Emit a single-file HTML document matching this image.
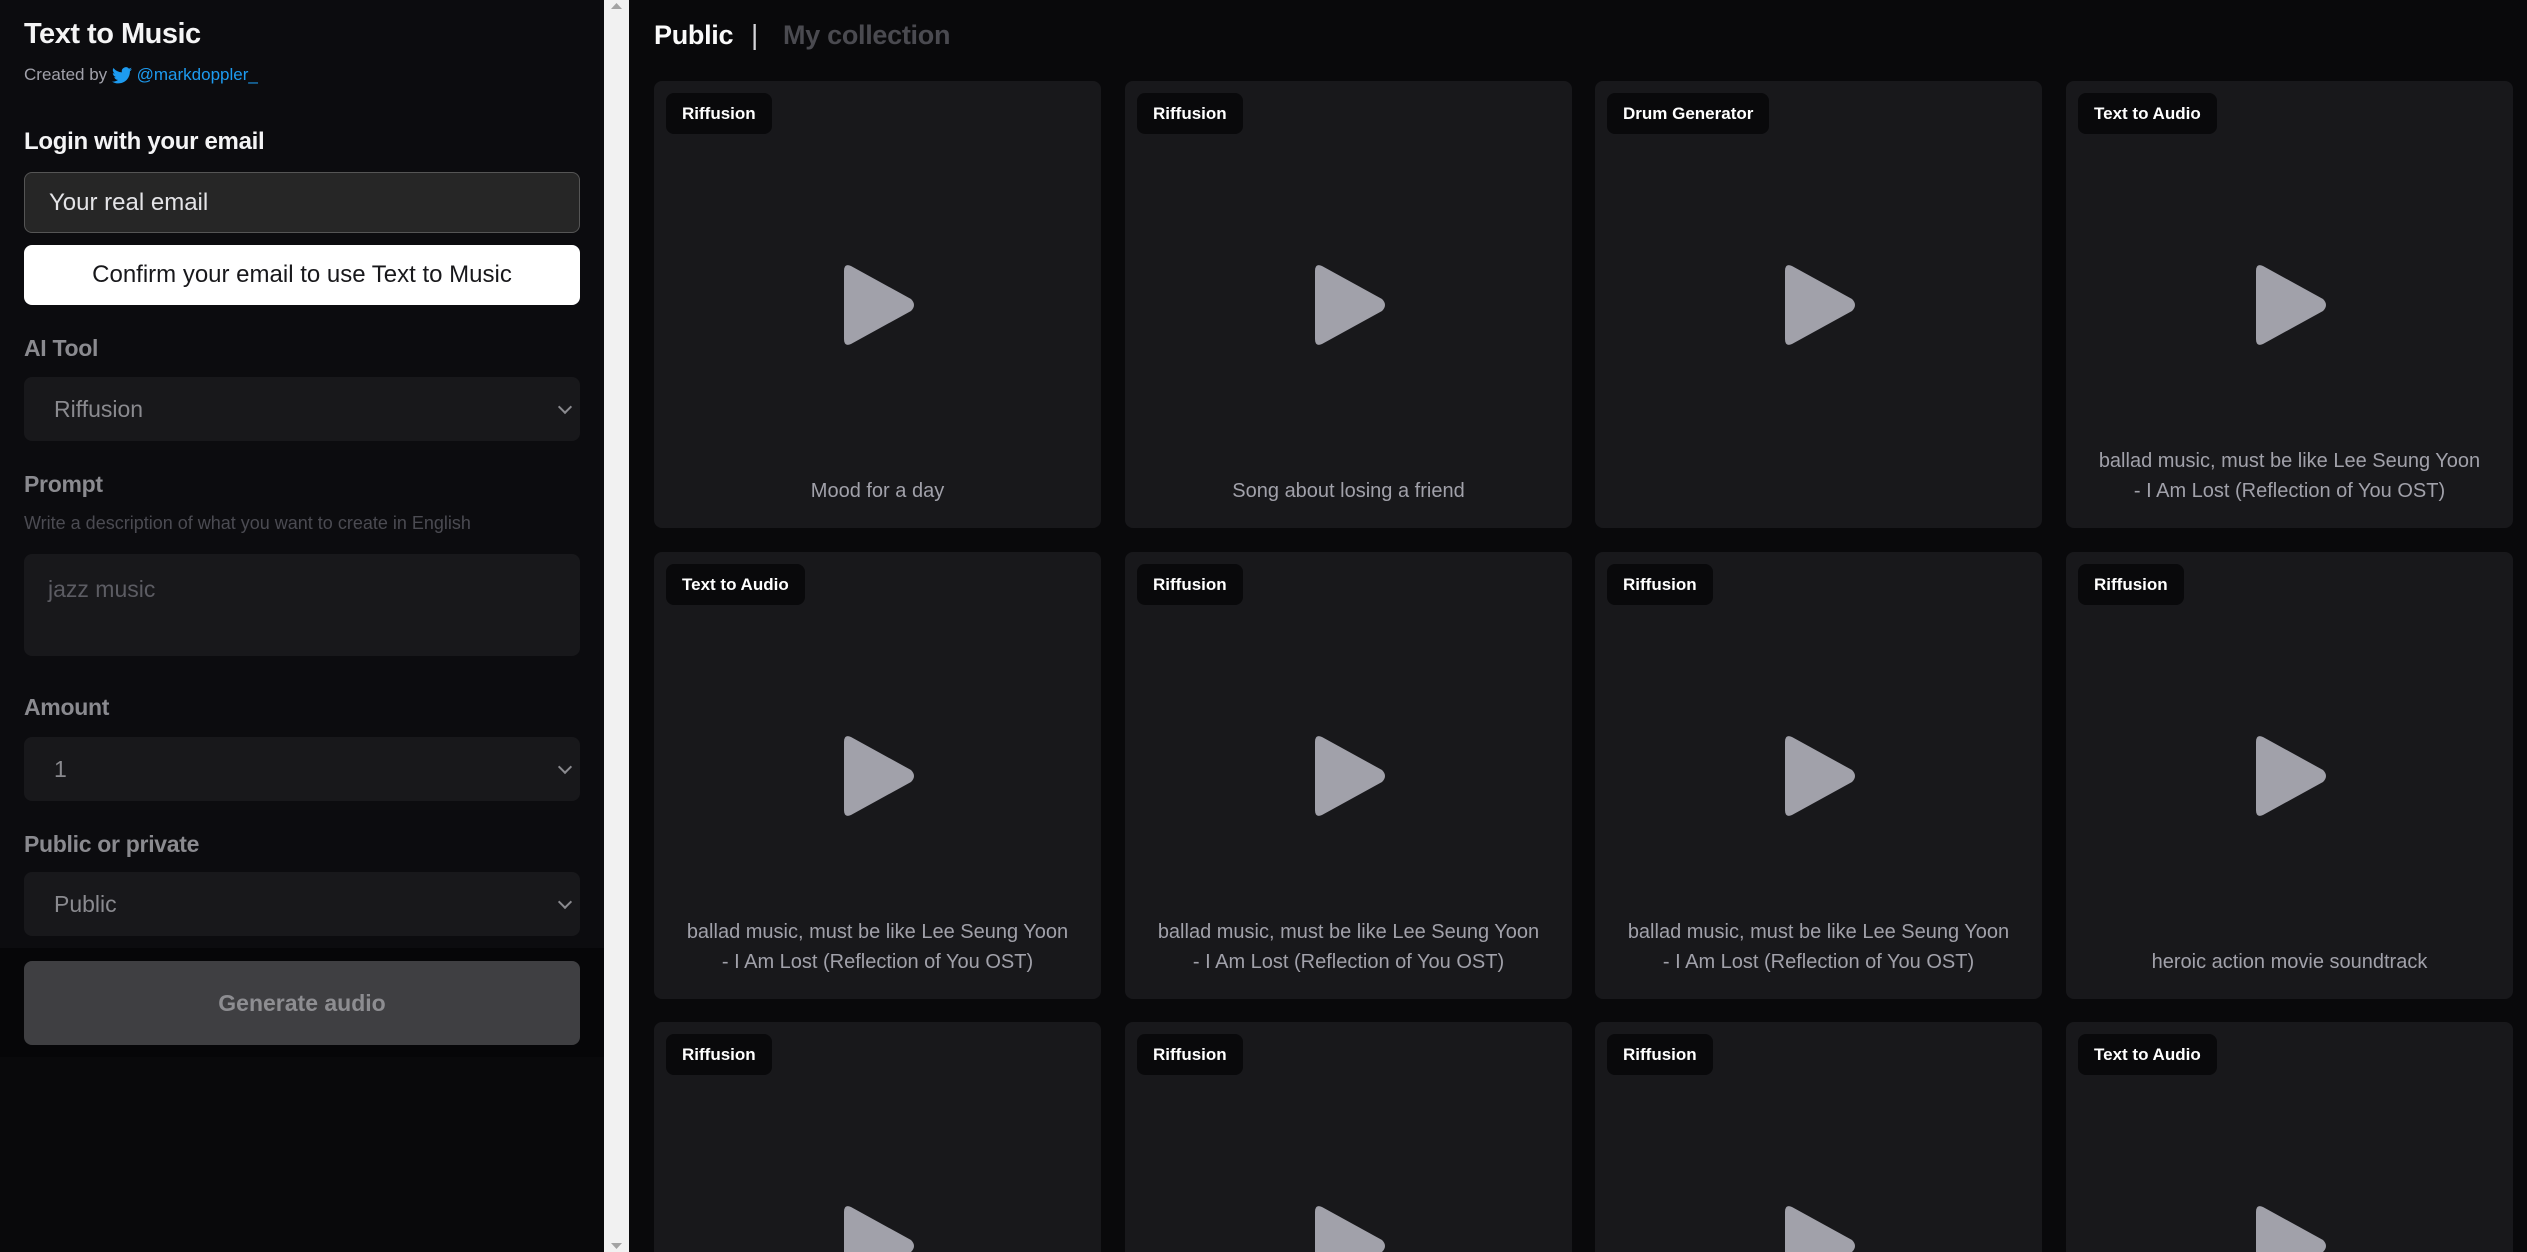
<!DOCTYPE html>
<html style="width:2527px;height:1252px;overflow:hidden"><head><meta charset="utf-8"><style>
*{box-sizing:border-box;margin:0;padding:0}
html,body{width:2527px;height:1252px;overflow:hidden}
body{background:#09090b;font-family:"Liberation Sans",sans-serif;position:relative}
#wrap{position:absolute;left:0;top:0;width:2527px;height:1252px;overflow:hidden}
.side{position:absolute;left:0;top:0;width:604px;height:1252px;background:#09090b}
.panel{position:absolute;left:0;top:0;width:604px;height:948px;background:#0c0c0f}
.band{position:absolute;left:0;top:948px;width:604px;height:109px;background:#060608}
.abs{position:absolute}
.lbl{position:absolute;left:24px;font-size:23px;font-weight:bold;color:#8a8a8f;letter-spacing:-0.3px}
.sel{position:absolute;left:24px;width:556px;background:#18181b;border-radius:8px;color:#8a8a8f;font-size:23px;padding-left:30px;display:flex;align-items:center}
.sel:after{content:"";position:absolute;right:10px;top:50%;width:8px;height:8px;border-right:2px solid #8a8a8f;border-bottom:2px solid #8a8a8f;transform:translateY(-70%) rotate(45deg)}
.sb{position:absolute;left:604px;top:0;width:25px;height:1252px;background:#f1f1f1}
.card{position:absolute;width:447px;height:447px;background:#18181b;border-radius:8px;overflow:hidden}
.badge{position:absolute;left:12px;top:12px;height:41px;line-height:41px;padding:0 16px;background:#09090b;border-radius:8px;color:#fff;font-weight:bold;font-size:17px}
.play{position:absolute;left:187px;top:182px}
.cap{position:absolute;left:10px;right:10px;bottom:22px;text-align:center;color:#a1a1aa;font-size:20px;line-height:30px}
</style></head><body><div id="wrap">
<div class="side">
<div class="panel"></div><div class="band"></div>
<div class="abs" style="left:24px;top:18px;font-size:29px;font-weight:bold;color:#f4f4f5;letter-spacing:-0.5px">Text to Music</div>
<div class="abs" style="left:24px;top:65px;font-size:17px;color:#a1a1aa;display:flex;align-items:center">Created by&nbsp;<svg width="20" height="17" viewBox="0 0 24 20"><path fill="#1d9bf0" d="M24 2.4c-.9.4-1.8.7-2.8.8 1-.6 1.8-1.6 2.2-2.7-1 .6-2 1-3.1 1.2A4.9 4.9 0 0 0 11.9 6.2 14 14 0 0 1 1.7 1 4.9 4.9 0 0 0 3.2 7.6c-.8 0-1.600-.3-2.2-.6 0 2.4 1.7 4.4 3.9 4.8-.7.2-1.5.2-2.2.1.6 2 2.4 3.4 4.6 3.4A9.9 9.9 0 0 1 0 17.3 14 14 0 0 0 7.5 19.5c9.1 0 14-7.5 14-14v-.6c1-.7 1.8-1.6 2.5-2.5z"/></svg>&nbsp;<span style="color:#1d9bf0">@markdoppler_</span></div>
<div class="abs" style="left:24px;top:128px;font-size:24px;font-weight:bold;color:#f4f4f5;letter-spacing:-0.3px">Login with your email</div>
<div class="abs" style="left:24px;top:172px;width:556px;height:61px;background:#262626;border:1px solid #555;border-radius:8px;color:#e4e4e7;font-size:24px;padding-left:24px;line-height:59px">Your real email</div>
<div class="abs" style="left:24px;top:245px;width:556px;height:60px;background:#fff;border-radius:8px;color:#18181b;font-size:24px;text-align:center;line-height:60px">Confirm your email to use Text to Music</div>
<div class="lbl" style="top:335px">AI Tool</div>
<div class="sel" style="top:377px;height:64px">Riffusion</div>
<div class="lbl" style="top:471px">Prompt</div>
<div class="abs" style="left:24px;top:513px;font-size:18px;color:#4b4b52">Write a description of what you want to create in English</div>
<div class="abs" style="left:24px;top:554px;width:556px;height:102px;background:#18181b;border-radius:8px;color:#5c5c63;font-size:23px;padding:22px 0 0 24px">jazz music</div>
<div class="lbl" style="top:694px">Amount</div>
<div class="sel" style="top:737px;height:64px">1</div>
<div class="lbl" style="top:831px">Public or private</div>
<div class="sel" style="top:872px;height:64px">Public</div>
<div class="abs" style="left:24px;top:961px;width:556px;height:84px;background:#3f3f42;border-radius:8px;color:#8d8d91;font-size:23px;font-weight:bold;text-align:center;line-height:84px">Generate audio</div>
</div>
<div class="sb"><svg class="abs" style="left:6px;top:2px" width="13" height="8"><path d="M1 7L6.5 1 12 7z" fill="#a3a3a3"/></svg><svg class="abs" style="left:6px;top:1242px" width="13" height="8"><path d="M1 1L6.5 7 12 1z" fill="#a3a3a3"/></svg></div>
<div class="abs" style="left:654px;top:20px;font-size:27px;font-weight:bold;color:#fafafa;letter-spacing:-0.3px">Public</div>
<div class="abs" style="left:751px;top:19px;font-size:28px;color:#d4d4d8">|</div>
<div class="abs" style="left:783px;top:20px;font-size:27px;font-weight:bold;color:#4a4a50;letter-spacing:-0.3px">My collection</div>
<div id="g"></div>
</div>
<script>
var d=[["Riffusion","Mood for a day"],["Riffusion","Song about losing a friend"],["Drum Generator",""],["Text to Audio","ballad music, must be like Lee Seung Yoon<br>- I Am Lost (Reflection of You OST)"],["Text to Audio","ballad music, must be like Lee Seung Yoon<br>- I Am Lost (Reflection of You OST)"],["Riffusion","ballad music, must be like Lee Seung Yoon<br>- I Am Lost (Reflection of You OST)"],["Riffusion","ballad music, must be like Lee Seung Yoon<br>- I Am Lost (Reflection of You OST)"],["Riffusion","heroic action movie soundtrack"],["Riffusion",""],["Riffusion",""],["Riffusion",""],["Text to Audio",""]];
var xs=[654,1125,1595,2066],ys=[81,552,1022],h="";
d.forEach(function(c,i){var r=Math.floor(i/4);h+='<div class="card" style="left:'+xs[i%4]+'px;top:'+ys[r]+'px'+(r==2?';height:230px;border-radius:8px 8px 0 0':'')+'"><div class="badge">'+c[0]+'</div><svg class="play" width="76" height="84" viewBox="0 0 76 84"><path d="M3 8Q3 0 10 3L70 36Q76 42 70 48L10 81Q3 84 3 76Z" fill="#a1a1aa"/></svg>'+(c[1]?'<div class="cap">'+c[1]+'</div>':'')+'</div>'});
document.getElementById("g").innerHTML=h;
</script>
</body></html>
